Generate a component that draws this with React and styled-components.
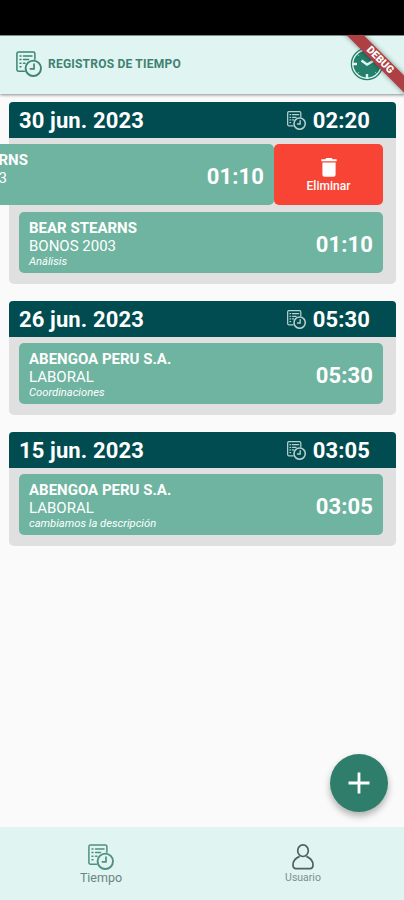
import React from 'react'

import styled, { createGlobalStyle } from 'styled-components'

const days = [
    {
        date: '30 jun. 2023',
        total: '02:20',
        records: [
            { client: 'BEAR STEARNS', matter: 'BONOS 2003', detail: 'Análisis', time: '01:10', swiped: true },
            { client: 'BEAR STEARNS', matter: 'BONOS 2003', detail: 'Análisis', time: '01:10' },
        ],
    },
    {
        date: '26 jun. 2023',
        total: '05:30',
        records: [
            { client: 'ABENGOA PERU S.A.', matter: 'LABORAL', detail: 'Coordinaciones', time: '05:30' },
        ],
    },
    {
        date: '15 jun. 2023',
        total: '03:05',
        records: [
            { client: 'ABENGOA PERU S.A.', matter: 'LABORAL', detail: 'cambiamos la descripción', time: '03:05' },
        ],
    },
]

export default function App() {
    return (
        <Screen>
            <GlobalStyle/>
            <StatusBar/>
            <AppBar>
                <TimesheetIcon size={26}/>
                <Title>REGISTROS DE TIEMPO</Title>
                <ClockLogo/>
                <RibbonCorner>
                    <Ribbon>DEBUG</Ribbon>
                </RibbonCorner>
            </AppBar>
            <DayList>
                {days.map(day => (
                    <Day key={day.date}>
                        <DayHeader>
                            <DayDate>{day.date}</DayDate>
                            <TimesheetIcon size={19} weight={1.7}/>
                            <DayTotal>{day.total}</DayTotal>
                        </DayHeader>
                        <DayBody>
                            {day.records.map((record, index) => <Record key={index} {...record}/>)}
                        </DayBody>
                    </Day>
                ))}
                <AddButton aria-label="add">
                    <svg width="22" height="22" viewBox="0 0 22 22">
                        <path d="M11 0.5v21M0.5 11h21" stroke="#fff" strokeWidth="2.8"/>
                    </svg>
                </AddButton>
            </DayList>
            <BottomNav>
                <NavItem $active>
                    <TimesheetIcon size={26}/>
                    <span>Tiempo</span>
                </NavItem>
                <NavItem>
                    <UserIcon/>
                    <span>Usuario</span>
                </NavItem>
            </BottomNav>
        </Screen>
    )
}

function Record({ client, matter, detail, time, swiped }) {
    return (
        <RecordTrack $swiped={swiped}>
            <RecordCard>
                <RecordText>
                    <Client>{client}</Client>
                    <Matter>{matter}</Matter>
                    <Detail>{detail}</Detail>
                </RecordText>
                <RecordTime>{time}</RecordTime>
            </RecordCard>
            {swiped && (
                <DeleteAction>
                    <svg width="16" height="19" viewBox="0 0 16 19" fill="#fff">
                        <path d="M0.3 1.2h4L5.3 0h5.4l1 1.2h4v2H0.3zM1.4 4.5h13.2v12.2a2 2 0 0 1-2 2H3.4a2 2 0 0 1-2-2z"/>
                    </svg>
                    <span>Eliminar</span>
                </DeleteAction>
            )}
        </RecordTrack>
    )
}

function TimesheetIcon({ size, weight = 1.5 }) {
    return (
        <svg width={size} height={size} viewBox="0 0 26 26" fill="none" stroke="currentColor" strokeWidth={weight} strokeLinecap="round">
            <path d="M8.5 20.2H2.6a1.7 1.7 0 0 1-1.7-1.7V2.6A1.7 1.7 0 0 1 2.6 0.9h14.6a1.7 1.7 0 0 1 1.7 1.7v5.6"/>
            <path d="M4 5h1M7.5 5h8.5M4 8.6h1M7.5 8.6h5M4 12.2h1M7.5 12.2h1.5M4 15.8h1"/>
            <circle cx="17.3" cy="17.3" r="7.7" strokeWidth={weight + 0.4}/>
            <path d="M18 13.2v4.6h-3.6" strokeWidth={weight + 0.2}/>
        </svg>
    )
}

function ClockLogo() {
    return (
        <svg width="34" height="34" viewBox="0 0 34 34" fill="none">
            <circle cx="17" cy="17" r="13.6" fill="#24806a"/>
            <circle cx="17" cy="17" r="15.6" stroke="#24806a" strokeWidth="1.3"/>
            <path d="M17 2.5v4.5M17 27v4.5M2.5 17h4.5M27 17h4.5" stroke="#e0f3f0" strokeWidth="2.4"/>
            <path d="M7 7l2 2M25 25l2 2M7 27l2-2M25 9l2-2" stroke="#8fc4b5" strokeWidth="1"/>
            <path d="M11.5 13.5l5.5 4 7-4" stroke="#e0f3f0" strokeWidth="2.4"/>
        </svg>
    )
}

function UserIcon() {
    return (
        <svg width="22" height="26" viewBox="0 0 22 26" fill="none" stroke="#50605c" strokeWidth="1.7">
            <ellipse cx="11" cy="6.7" rx="5.3" ry="5.8"/>
            <path d="M7.6 12.4C3.6 14 1 17.4 1 21c0 2.4 1 3.6 3 3.6h14c2 0 3-1.2 3-3.6 0-3.6-2.6-7-6.6-8.6"/>
        </svg>
    )
}

const GlobalStyle = createGlobalStyle`
    body {
        margin: 0;
        font-family: Roboto, sans-serif;
    }

    * {
        box-sizing: border-box;
    }
`

const Screen = styled.div`
    width: 404px;
    height: 900px;
    overflow: hidden;
    background: #fafafa;

    display: flex;
    flex-direction: column;
`

const StatusBar = styled.div`
    height: 35px;
    flex-shrink: 0;
    background: #000;
`

const AppBar = styled.header`
    position: relative;
    z-index: 1;
    height: 59px;
    flex-shrink: 0;
    padding: 0 20px 2px 16px;
    border-top: 1px solid #7d8a88;
    background: #e0f4f1;
    box-shadow: 0 1px 3px rgba(0, 0, 0, 0.45);
    color: #3c8574;

    display: flex;
    align-items: center;
`

const Title = styled.h1`
    flex-grow: 1;
    margin: 0 0 0 6px;
    font-size: 12px;
    font-weight: 700;
    letter-spacing: 0.22px;
    color: #3f8172;
`

const RibbonCorner = styled.div`
    position: absolute;
    top: -1px;
    right: 0;
    width: 70px;
    height: 66px;
    overflow: hidden;
`

const Ribbon = styled.div`
    position: absolute;
    top: 19px;
    left: -14px;
    width: 120px;
    height: 12px;
    background: #ae3f42;
    box-shadow: 0 0 5px rgba(0, 0, 0, 0.45);
    transform: rotate(45deg);

    color: #fff;
    font-size: 10.5px;
    font-weight: 900;
    line-height: 12px;
    text-align: center;
`

const DayList = styled.main`
    position: relative;
    flex-grow: 1;
    padding: 8px 8px 0 9px;

    display: flex;
    flex-direction: column;
    gap: 17px;
`

const Day = styled.section`
    border-radius: 5px;
    background: #e0e0e0;
`

const DayHeader = styled.div`
    height: 36px;
    padding: 1px 26px 0 10px;
    border-radius: 4px 4px 0 0;
    background: #004c50;
    color: #b7d0d0;

    display: flex;
    align-items: center;
`

const DayDate = styled.span`
    flex-grow: 1;
    color: #fff;
    font-size: 22px;
    font-weight: 700;
    letter-spacing: 0.12px;
`

const DayTotal = styled.span`
    margin-left: 7px;
    color: #fff;
    font-size: 22px;
    font-weight: 700;
    letter-spacing: 0.1px;
`

const DayBody = styled.div`
    padding: 6px 13px 11px 10px;

    display: flex;
    flex-direction: column;
    gap: 7px;
`

const RecordTrack = styled.div`
    height: 61px;

    display: flex;
    justify-content: flex-end;
    margin-left: ${props => props.$swiped ? '-119px' : '0'};
`

const RecordCard = styled.div`
    width: 364px;
    flex-shrink: 0;
    padding: 0 10px;
    border-radius: 5px;
    background: #6eb4a0;
    color: #fff;

    display: flex;
    align-items: center;
    justify-content: space-between;
`

const RecordText = styled.div`
    padding-top: 2px;

    display: flex;
    flex-direction: column;
`

const Client = styled.span`
    font-size: 15px;
    font-weight: 700;
    line-height: 18px;
`

const Matter = styled.span`
    font-size: 15px;
    line-height: 18px;
`

const Detail = styled.span`
    font-size: 11.2px;
    font-style: italic;
    line-height: 13px;
`

const RecordTime = styled.span`
    padding-top: 4px;
    font-size: 22px;
    font-weight: 700;
    letter-spacing: 0.1px;
`

const DeleteAction = styled.button`
    width: 109px;
    flex-shrink: 0;
    padding: 2px 0 0;
    border: none;
    border-radius: 5px;
    background: #f74434;
    color: #fff;
    font-family: inherit;
    font-size: 12px;
    font-weight: 500;

    display: flex;
    flex-direction: column;
    align-items: center;
    justify-content: center;
    gap: 2px;
`

const AddButton = styled.button`
    position: absolute;
    right: 16px;
    bottom: 15px;
    width: 58px;
    height: 58px;
    padding: 0;
    border: none;
    border-radius: 50%;
    background: #2f7e6b;
    box-shadow: 0 4px 7px rgba(0, 0, 0, 0.3);

    display: flex;
    align-items: center;
    justify-content: center;
`

const BottomNav = styled.nav`
    height: 73px;
    flex-shrink: 0;
    background: #e0f4f1;

    display: flex;
`

const NavItem = styled.div`
    flex: 1;
    padding-top: 17px;
    color: ${props => props.$active ? '#4f9080' : '#7d8f8b'};
    font-size: ${props => props.$active ? '12.5px' : '10.5px'};
    line-height: 15px;

    display: flex;
    flex-direction: column;
    align-items: center;

    span {
        color: ${props => props.$active ? '#67877f' : '#7d8f8b'};
    }
`
